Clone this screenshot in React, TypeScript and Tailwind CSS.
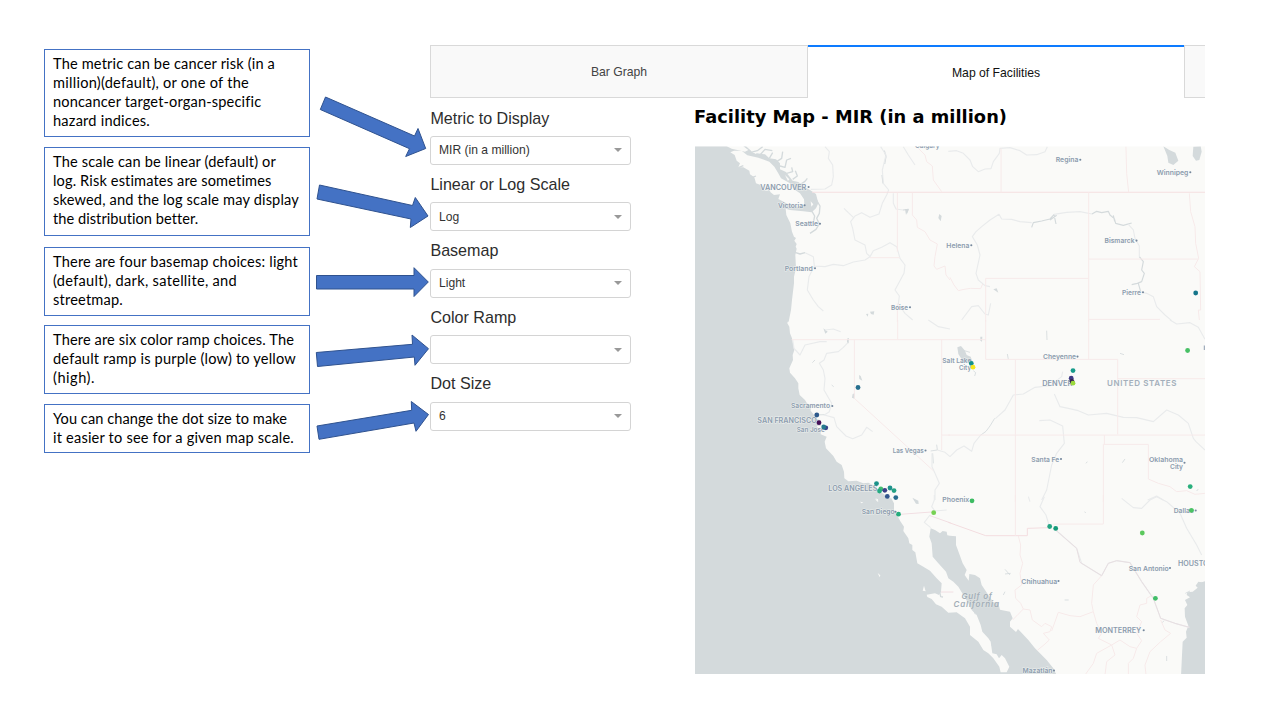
import React from "react";

type Line = { text: string; width: number };

const callouts: { box: string; lines: Line[] }[] = [
  {
    box: "h-[88px]",
    lines: [
      { text: "The metric can be cancer risk (in a", width: 222 },
      { text: "million)(default), or one of the", width: 196 },
      { text: "noncancer target-organ-specific", width: 208 },
      { text: "hazard indices.", width: 97 },
    ],
  },
  {
    box: "mt-[10px] h-[89px]",
    lines: [
      { text: "The scale can be linear (default) or", width: 223 },
      { text: "log. Risk estimates are sometimes", width: 219 },
      { text: "skewed, and the log scale may display", width: 246 },
      { text: "the distribution better.", width: 145 },
    ],
  },
  {
    box: "mt-[11px] h-[69px]",
    lines: [
      { text: "There are four basemap choices: light", width: 245 },
      { text: "(default), dark, satellite, and", width: 184 },
      { text: "streetmap.", width: 70 },
    ],
  },
  {
    box: "mt-[9px] h-[69px]",
    lines: [
      { text: "There are six color ramp choices. The", width: 241 },
      { text: "default ramp is purple (low) to yellow", width: 243 },
      { text: "(high).", width: 42 },
    ],
  },
  {
    box: "mt-[10px] h-[49px]",
    lines: [
      { text: "You can change the dot size to make", width: 234 },
      { text: "it easier to see for a given map scale.", width: 241 },
    ],
  },
];

const fields: { label: string; value: string }[] = [
  { label: "Metric to Display", value: "MIR (in a million)" },
  { label: "Linear or Log Scale", value: "Log" },
  { label: "Basemap", value: "Light" },
  { label: "Color Ramp", value: "" },
  { label: "Dot Size", value: "6" },
];

/* A line whose letter spacing is adjusted to fill the given width. */
function FittedLine({ text, width }: Line) {
  const ref = React.useRef<HTMLSpanElement>(null);
  const [spacing, setSpacing] = React.useState(0);
  React.useLayoutEffect(() => {
    if (ref.current) {
      const natural = ref.current.getBoundingClientRect().width;
      setSpacing((width - natural) / text.length);
    }
  }, [text, width]);
  return (
    <span className="block h-[19.3px] whitespace-nowrap">
      <span ref={ref} style={{ letterSpacing: spacing }}>
        {text}
      </span>
    </span>
  );
}

function Arrows() {
  return (
    <svg className="block h-[720px] w-[120px] shrink-0" viewBox="310 0 120 720">
      <g fill="#4472c4" stroke="#2f528f" strokeWidth="1">
        <path d="M325.5 97 L414.5 136 L418 128.5 L425.7 148.5 L405.7 156.5 L409.5 148.7 L320.3 109.5Z" />
        <path d="M319.5 185 L412.5 205.5 L415.3 197.5 L428 216 L410.3 227.5 L411 219 L317 199Z" />
        <path d="M316.5 275.5 H414 V267.7 L428.3 282 L414 296.5 V289 H316.5Z" />
        <path d="M316.3 352.5 L412.5 344.3 L412 335 L428.5 348.7 L415 365.3 L414.3 357 L317.5 366.5Z" />
        <path d="M317 426 L411.7 410.3 L411.3 401.5 L428.5 414.5 L416 431.3 L414 423 L319 439.3Z" />
      </g>
    </svg>
  );
}

/* text, left, baseline, width, size */
const cities: [string, number, number, number, number][] = [
  ["VANCOUVER", 760.3, 189.5, 46, 6.9],
  ["Victoria", 778, 207.8, 25, 6.6],
  ["Seattle", 795.3, 226.1, 22.7, 6.6],
  ["Portland", 784.7, 270.8, 28, 6.6],
  ["Boise", 891, 309.8, 17, 6.6],
  ["Helena", 946.3, 247.8, 23, 6.6],
  ["Calgary", 915, 148.3, 24.5, 6.6],
  ["Regina", 1055.7, 162.4, 22.7, 6.6],
  ["Winnipeg", 1156.7, 175, 31.7, 6.6],
  ["Bismarck", 1104.5, 243.1, 30, 6.6],
  ["Pierre", 1122, 294.5, 19, 6.6],
  ["Cheyenne", 1043, 359.3, 33, 6.6],
  ["Salt Lake", 942.3, 363.4, 29, 6.6],
  ["City", 959, 369.9, 12, 6.6],
  ["DENVER", 1042.3, 386, 30, 6.9],
  ["Sacramento", 791, 408.3, 39, 6.6],
  ["SAN FRANCISCO", 757.3, 423.4, 59.5, 6.9],
  ["San Jose", 796.7, 431.6, 28, 6.6],
  ["Las Vegas", 892.7, 453.1, 31, 6.6],
  ["LOS ANGELES", 828.3, 491.2, 49, 6.9],
  ["Santa Fe", 1031.3, 461.5, 28, 6.6],
  ["Oklahoma", 1149, 462.4, 34, 6.6],
  ["City", 1170, 468.9, 13, 6.6],
  ["Phoenix", 942.3, 501.6, 27, 6.6],
  ["San Diego", 861.7, 514.4, 33, 6.6],
  ["Dallas", 1173.7, 513.2, 20, 6.6],
  ["San Antonio", 1128.7, 570.9, 40, 6.6],
  ["HOUSTON", 1178, 565.5, 36, 6.9],
  ["Chihuahua", 1021.3, 583.9, 36, 6.6],
  ["MONTERREY", 1095.3, 633.2, 46, 6.9],
  ["Mazatlán", 1022.5, 672.7, 30, 6.6],
];

const cityMarks: [number, number][] = [
  [808.6, 187], [804.6, 205.3], [820, 223.7], [815, 268.3], [910, 307.3], [971.3, 245.3],
  [1080.3, 159.7], [1190.3, 172.2], [1136.5, 240.6], [1143, 292.3], [1077.5, 356.6], [832.3, 406],
  [925.5, 450.5], [1061, 459], [1184.5, 462.7], [895.5, 511.7], [1195.7, 510.5], [1170, 568], [1058.5, 581],
  [1143.7, 630.3], [1054, 670.5],
];

const facilities: [number, number, string][] = [
  [1195.7, 293, "#14758a"], [1187.6, 350.5, "#47c065"], [1073, 370.6, "#179c8b"], [1071.2, 378.2, "#3e3a84"],
  [1072, 381.3, "#36234f"], [1073, 383.2, "#9bd93c"], [971.3, 363.4, "#12908a"], [973, 367.2, "#f5e61d"],
  [858, 387.5, "#276f8e"], [816.8, 415, "#2d598c"], [819, 422.7, "#440f57"], [825.8, 427.8, "#38458a"],
  [823.7, 427, "#267a8e"], [876.5, 483.6, "#1b9289"], [880.8, 489, "#42bd70"], [879.5, 491, "#24aa82"],
  [884.8, 490.3, "#3b4187"], [890, 488, "#1f928c"], [894, 490.6, "#25a184"], [887.3, 496.4, "#32558c"],
  [895.8, 497.6, "#2a6c8e"], [898.5, 514.2, "#25ac7d"], [933.7, 512.7, "#77d153"], [972, 500.8, "#3cbb62"],
  [1190.2, 486.6, "#29af7c"], [1191.4, 510.3, "#4bc263"], [1142.3, 533, "#5bc85d"], [1049.7, 526.5, "#23a583"],
  [1055.7, 528.4, "#149a79"], [1155.4, 598.3, "#40bd68"],
];

const T5 = "translate(690 140) scale(0.33333)";
const T6 = "translate(950 140) scale(0.33333)";
const T7 = "translate(690 320) scale(0.33333)";
const T8 = "translate(950 320) scale(0.33333)";
const T9 = "translate(690 495) scale(0.33333)";
const T10 = "translate(950 495) scale(0.33333)";

function FacilityMap() {
  return (
    <svg className="block h-[528px] w-[510px]" viewBox="695 146 510 528">
      <rect x="695" y="146.3" width="510" height="528" fill="#fafaf8" />

      {/* Water */}
      <g fill="#d4dadc">
        <path
          transform={T5}
          d="M15 19 L110 19 L125 26 L165 35 L175 30 L160 19 L168 19 L190 38 L225 43 L238 55 L258 58 L270 70 L270 88 L288 96 L300 112 L308 122 L325 126 L345 142 L360 150 L378 162 L385 190 L378 205 L365 217 L340 214 L300 210 L287 206 L289 225 L301 250 L306 275 L312 290 L318 294 L313 302 L320 312 L317 320 L320 326 L316 345 L318 385 L312 410 L312 430 L306 480 L303 510 L296 545 L15 545Z"
        />
        <path
          transform={T7}
          d="M15 -10 L297 -10 L292 10 L298 20 L300 40 L306 55 L313 90 L308 105 L309 120 L298 145 L300 158 L315 175 L325 190 L325 205 L329 225 L345 240 L350 248 L362 260 L362 272 L372 285 L382 298 L391 300 L392 317 L380 318 L392 335 L392 343 L410 350 L404 365 L408 385 L430 408 L440 425 L455 435 L462 455 L463 475 L475 484 L500 482 L520 490 L535 488 L555 498 L562 515 L578 520 L592 530 L604 550 L15 550Z"
        />
        <path
          transform={T9}
          d="M15 10 L604 10 L612 25 L612 45 L622 62 L632 80 L642 95 L640 108 L655 130 L658 145 L667 150 L667 165 L676 172 L682 205 L700 215 L720 227 L740 250 L755 265 L753 290 L747 300 L735 295 L710 299 L712 306 L725 312 L738 328 L755 335 L775 353 L800 352 L825 370 L840 395 L840 420 L865 440 L880 465 L895 475 L910 490 L928 515 L935 545 L15 545Z"
        />
        <path
          transform={T10}
          d="M-58 100 L-45 105 L-30 115 L-22 108 L-10 110 L-8 121 L0 122 L18 124 L18 150 L28 177 L38 205 L50 225 L44 240 L56 257 L58 237 L75 240 L90 250 L95 270 L115 300 L130 322 L145 325 L150 344 L180 350 L188 370 L180 380 L180 395 L198 411 L204 402 L235 435 L255 460 L290 495 L310 520 L322 545 L145 545 L150 532 L170 532 L178 515 L165 490 L155 480 L147 490 L140 478 L127 475 L122 440 L115 430 L97 410 L92 390 L80 360 L65 345 L55 325 L40 300 L25 275 L10 260 L-5 250 L-12 230 L-35 205 L-52 185 L-55 145 L-62 125Z"
        />
        <path
          transform={T10}
          d="M770 257 L755 262 L745 260 L737 272 L743 278 L728 290 L712 292 L710 300 L720 307 L705 315 L712 330 L704 340 L705 365 L715 392 L708 410 L710 428 L698 440 L696 480 L693 545 L770 545Z"
        />
        {/* Lakes */}
        <path transform={T6} d="M640 19 L658 30 L676 38 L685 62 L670 75 L655 68 L652 48Z" />
        <path transform={T6} d="M730 20 L752 19 L755 35 L748 60 L738 62 L728 48Z" />
        <path transform={T8} d="M22 82 L33 78 L45 92 L50 105 L62 110 L70 132 L58 128 L35 118 L25 102Z" />
        <path transform={T9} d="M667 8 L685 17 L686 27 L678 26Z" />
        <path transform={T7} d="M488 222 L495 220 L494 236 L486 233Z M471 56 L477 54 L476 70 L471 68Z" />
        <path transform={T7} d="M507 165 L512 168 L517 182 L508 177Z M400 25 L413 35 L406 41Z" />
        <path transform={T5} d="M528 522 L535 521 L533 530Z M540 515 L553 514 L551 524 L543 522Z M645 207 L655 210 L648 225Z M748 222 L755 228 L752 244 L745 234Z" />
        <path transform={T6} d="M130 448 L140 445 L145 458Z" />
        <path transform={T8} d="M91 50 L97 50 L96 65 L91 62Z" />
      </g>

      {/* Islands */}
      <g fill="#fafaf8">
        <path
          transform={T5}
          d="M121 37 L132 32 L155 32 L172 46 L205 53 L238 65 L253 80 L264 98 L273 115 L300 130 L312 148 L330 160 L342 178 L343 195 L325 202 L295 193 L265 177 L270 163 L252 165 L238 154 L222 150 L212 135 L198 130 L193 112 L180 103 L178 92 L160 82 L145 82 L150 70 L140 62 L134 45Z"
        />
        <path transform={T5} d="M181 25 L203 33 L198 42 L185 35Z M285 105 L298 118 L294 123Z M362 184 L370 193 L364 200Z" />
        <path transform={T9} d="M563 234 L571 241 L569 247Z M702 272 L707 289 L698 287Z M555 11 L566 18 L562 20Z M510 20 L520 22 L515 25Z" />
        <path transform={T7} d="M556 535 L564 538 L564 544Z" />
      </g>

      {/* Inlets and reservoirs */}
      <g fill="none" stroke="#d4dadc" strokeWidth="4" strokeLinejoin="round">
        <path
          transform={T5}
          d="M180 38 L202 32 L218 20 M210 45 L225 28 L247 32 M238 55 L248 38 M260 65 L275 55 L278 35 M270 78 L285 82 L290 60 L303 55 M290 100 L308 95 L305 82 M308 118 L322 108 L316 92 M330 134 L345 124 L352 115 M372 165 L382 185 L390 198 L388 220 L380 235 L388 252 L378 268 L360 280 M366 214 L374 228 L370 248 M315 337 L330 342 L345 338 M240 155 L228 143 M185 113 L198 108 M145 83 L160 77"
        />
        <path transform={T6} d="M245 262 L250 248 L275 243 L300 237 L312 224 L318 252 M300 240 L320 226 M426 222 L440 214 L455 218 L475 214 L480 225 L493 236 L497 250 L520 256 L545 249 M568 350 L580 365 L575 390 L583 400 L575 425 L562 430 L545 434 M565 430 L572 455 M490 226 L494 244" strokeWidth="3.5" />
        <path transform={T8} d="M134 295 L120 318 L108 334 L90 347 M43 92 L60 97 M70 152 L77 158 L74 168 M290 32 L291 60 M172 102 L175 118 M510 100 L522 104 M408 430 L412 425 M517 428 L525 417 M740 513 L745 507" strokeWidth="2.5" />
        <path transform={T10} d="M165 223 L180 240 M165 237 L182 235 M160 300 L165 290 M344 315 L356 315 M70 345 L76 358 M125 450 L138 470 M650 483 L650 498 M637 383 L642 377 M404 50 L407 54 M740 270 L755 262 M706 295 L720 288" strokeWidth="2.5" />
        <path transform={T9} d="M748 285 L752 305 L759 306" strokeWidth="4" />
        <path transform={T5} d="M583 32 L588 50 L584 72 M576 105 L579 130 M639 210 L655 208 L650 220" strokeWidth="3.5" />
        <path transform={T7} d="M367 128 L375 120 M425 195 L431 200 M372 285 L405 284 M722 393 L742 390 L740 374 M728 400 L730 430" strokeWidth="2.5" />
      </g>

      {/* Rivers */}
      <g fill="none" stroke="#e9ebec" strokeWidth="3.4" strokeLinejoin="round">
        <path transform={T5} d="M405 20 L418 35 L415 55 L428 75 L430 110 L425 135 L405 147 L362 148 M572 20 L588 45 L577 90 L580 130 L596 150 L590 165 L577 190 L567 222 L540 232 L515 218 L495 228 L482 245 L488 265 L495 300 L525 315 L530 340 L540 350 L525 360 L490 366 L460 377 L430 373 L405 380 L372 378 M345 338 L370 350 L373 378 L357 410 L352 450 L370 480 L385 500 L400 513 M462 205 L475 218 L490 232 M610 160 L610 190 L618 207 L640 210 M540 350 L550 332 L575 322 L600 308 L620 320 L630 355 L645 375 L642 400 L615 450 L628 468 L625 492 L645 520 L668 540 M640 20 L655 45 L675 75" />
        <path transform={T6} d="M-5 34 L20 32 L40 40 L60 60 L68 80 L85 95 L105 87 L123 86 L130 65 L148 40 L150 25 L180 23 L210 32 L230 45 L260 44 L285 35 L292 20 M245 248 L210 245 L185 238 L155 237 L147 223 L120 240 L95 260 L78 275 L67 290 L82 315 L90 345 L78 400 L85 420 L105 437 L120 440 M312 223 L350 217 L390 215 L426 222 M535 253 L550 270 L555 295 L568 318 L568 350 M568 455 L590 460 L610 470 L620 500 L645 525 L665 542 M35 540 L65 500 L85 497 L105 522 L115 525 L122 490" />
        <path transform={T8} d="M660 0 L680 12 L720 8 L745 22 L765 58 M0 410 L20 390 L42 378 L65 394 L72 370 L92 345 M136 296 L165 270 L190 225 L220 222 L255 202 L300 197 L335 170 L338 155 M313 222 L330 260 L355 265 L385 272 L415 285 L470 280 L520 292 L560 293 L610 305 L650 270 L685 285 L715 310 L730 355 L738 365 L765 390 M268 302 L300 300 L338 318 L343 370 L320 400 L305 435 L290 510 L275 540 M593 540 L620 528 L640 540 M235 530 L240 545" />
        <path transform={T7} d="M308 60 L312 85 L330 105 L345 75 L390 65 L410 65 M474 68 L460 82 L445 95 L410 100 L402 120 L388 130 L400 150 L405 175 L402 210 L425 250 L418 275 L403 285 L432 293 L440 320 L468 348 L488 356 L515 345 L530 322 L548 335 M405 30 L430 27 L452 35 M715 0 L745 20 L780 27 M726 400 L726 440 L735 460 L748 490 L735 510 L735 540 M742 390 L765 397 L780 410" />
        <path transform={T10} d="M283 5 L270 35 L288 60 L297 90 M515 10 L550 38 L575 40 L600 15 L620 5 L650 20 L690 55 L710 100 L740 150 L755 180 M317 105 L380 160 L395 205 L455 242 L475 205 L500 197 L540 203 L575 260 L610 310 L632 370 L675 385 L718 397" />
        <path transform={T9} d="M733 0 L733 15 L725 35 L735 48 L770 45 M720 60 L703 82 L722 98" />
      </g>

      {/* State and national borders */}
      <g fill="none" stroke="#f7eaea" strokeWidth="3">
        <path d="M812 192.3 H1205" stroke="#f5dfe1" strokeWidth="1.1" />
        <path transform={T5} d="M622 158 V335 M540 353 H629 M622 490 V545 M667 158 V225 L680 240 L682 262 L705 275 L720 300 L742 312 L735 350 L732 378 L740 388 L765 378 L768 405 L780 420 M680 20 L705 45 L710 65 L727 78 L730 120 L755 155" />
        <path transform={T6} d="M153 25 V157 M528 20 L530 100 L536 157 M416 157 V545 M107 545 V415 H416 M416 357 H745 M718 160 L722 215 L735 260 L737 310 L746 355 L733 380 L750 395 L752 510 L745 510 L748 540 M416 538 H630 M0 412 L12 435 L25 452 L42 448 L62 445 L92 446 L98 432" />
        <path transform={T7} d="M305 59 H780 M493 59 V235 L730 452 M623 0 V59 M755 59 V390 M755 345 H780" />
        <path transform={T8} d="M0 59 H107 M107 0 V118 H503 V343 M416 0 V118 M196 118 V545 M503 176 H765 M-5 345 H765 M463 345 V373 M460 373 V545 M460 373 H595 V477 L625 490 L660 500 L680 515 L710 512 L735 523 L765 520" />
        <path transform={T9} d="M630 58 L725 51 M720 62 L782 84 M753 291 H790" stroke="#f2dfe3" />
        <path transform={T10} d="M-5 82 L107 122 H232 V100 L298 98" stroke="#f3dde0" />
        <path transform={T10} d="M196 0 V122 M460 0 V87 H310 M205 123 L212 150 L210 180 L218 205 L210 235 L215 270 L195 285 L197 310 L212 325 L220 342 L188 375 M220 342 L240 345 L247 375 L275 395 L285 385 L305 395 L300 410 L280 415 L298 435 L285 447 L262 466 M455 242 L430 270 L425 325 L430 350 M305 408 L325 352 L360 362 L390 365 L430 350 L440 385 L455 415 L445 430 L485 450 L510 435 L540 455 L560 460 L575 437 L560 415 L575 380 L560 365 L570 330 L590 325 L590 310 L608 300 M632 375 L645 405 L662 415 L632 440 L600 470 L585 510 L588 540 M485 450 L440 475 L430 505 L405 540 M560 460 L550 490 L535 505 L535 540 M485 450 L495 480 L470 500 L465 540" />
        <path transform={T10} d="M317 105 L380 160 L390 202 L455 242 L475 205 L500 197 L540 203 L575 260 L610 310 L632 370 L675 385 L718 397" stroke="#e8dfe2" />
      </g>

      {/* Place names */}
      <g
        fill="#8c9cae"
        stroke="#fafaf8"
        strokeOpacity="0.6"
        strokeWidth="1.2"
        style={{ paintOrder: "stroke" }}
        fontFamily="Inter, 'Open Sans', sans-serif"
        fontWeight="600"
      >
        {cities.map(([name, x, y, width, size], i) => (
          <text key={i} x={x} y={y} fontSize={size} textLength={width} lengthAdjust="spacingAndGlyphs">
            {name}
          </text>
        ))}
        <text x="1107" y="386.2" fontSize="8" textLength="69.5" lengthAdjust="spacing" fill="#a3afbb">
          UNITED STATES
        </text>
        <g fontStyle="italic" fontSize="8" fill="#a3aeb7" strokeOpacity="0.2">
          <text x="961.5" y="598.5" textLength="30.5" lengthAdjust="spacing">Gulf of</text>
          <text x="953.5" y="606.7" textLength="45.5" lengthAdjust="spacing">California</text>
        </g>
      </g>
      <path d="M1204.3 345.5 V350" stroke="#8c9cae" strokeWidth="1" />
      <g fill="#76889d">
        {cityMarks.map(([x, y], i) => (
          <circle key={i} cx={x} cy={y} r="1.05" />
        ))}
      </g>

      {/* Facilities */}
      {facilities.map(([x, y, color], i) => (
        <circle key={i} cx={x} cy={y} r="2.4" fill={color} />
      ))}
      {/* Area above the tiles' top edge */}
      <rect x="695" y="146" width="510" height="0.3" fill="#ffffff" />
    </svg>
  );
}

export default function App() {
  return (
    <main className="flex h-[720px] w-[1280px] overflow-hidden bg-white font-['Liberation_Sans',sans-serif]">
      <section className="flex w-[310px] shrink-0 flex-col pt-[49px] pl-[44px]">
        {callouts.map((c, i) => (
          <div
            key={i}
            className={`w-[266px] shrink-0 border border-[#4472c4] pt-[3.5px] pl-[8px] font-[Lato,sans-serif] text-[14.6px] leading-[19.3px] text-black ${c.box}`}
          >
            {c.lines.map((line) => (
              <FittedLine key={line.text} {...line} />
            ))}
          </div>
        ))}
      </section>

      <Arrows />

      <section className="flex w-[775px] shrink-0 flex-col overflow-hidden pt-[45px]">
        <div className="flex h-[53px] shrink-0 text-[12.2px]">
          <div className="flex w-[378px] shrink-0 items-center justify-center border border-[#d9d9d9] bg-[#f9f9f9] pt-[2px] text-[#444]">
            Bar Graph
          </div>
          <div className="flex w-[376px] shrink-0 items-center justify-center border-t-2 border-[#0d7bff] pt-[2px] text-[#111]">
            Map of Facilities
          </div>
          <div className="w-[21px] shrink-0 border border-r-0 border-[#d9d9d9] bg-[#f9f9f9]" />
        </div>
        <div className="flex">
          <div className="w-[264px] shrink-0 pt-[9.6px]">
            {fields.map((f) => (
              <div key={f.label} className="h-[66.4px]">
                <div className="h-[28.4px] pl-[0.4px] text-[16.1px] leading-[20px] text-[#2d2d2d]">{f.label}</div>
                <div className="flex h-[29px] w-[201px] items-center justify-between rounded-[3px] border border-[#d4d4d4] pr-[8px] pl-[8px] text-[12.1px] text-[#333]">
                  <span>{f.value}</span>
                  <span className="border-x-4 border-t-4 border-x-transparent border-t-[#999]" />
                </div>
              </div>
            ))}
          </div>
          <div className="w-[511px] shrink-0">
            <h1 className="h-[48px] pt-[7px] font-['DejaVu_Sans',Verdana,sans-serif] text-[17.8px] leading-[24px] font-bold text-black">
              <FittedLine text="Facility Map - MIR (in a million)" width={313} />
            </h1>
            <div className="pl-px">
              <FacilityMap />
            </div>
          </div>
        </div>
      </section>
    </main>
  );
}
